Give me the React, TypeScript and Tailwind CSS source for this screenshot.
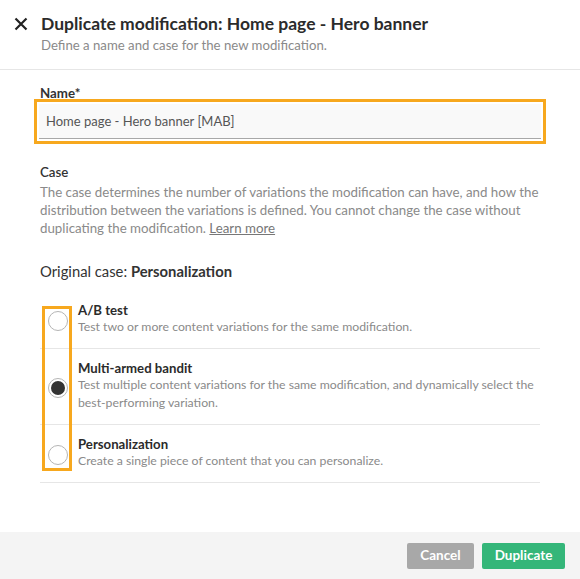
import { useState } from 'react';

const options = [
  {
    id: 'ab',
    title: 'A/B test',
    description: 'Test two or more content variations for the same modification.',
  },
  {
    id: 'mab',
    title: 'Multi-armed bandit',
    description:
      'Test multiple content variations for the same modification, and dynamically select the best-performing variation.',
  },
  {
    id: 'perso',
    title: 'Personalization',
    description: 'Create a single piece of content that you can personalize.',
  },
];

export default function App() {
  const [name, setName] = useState('Home page - Hero banner [MAB]');
  const [selected, setSelected] = useState('mab');

  return (
    <div className="flex h-[579px] w-[580px] flex-col bg-white font-['Lato',sans-serif] text-[#333]">
      <header className="flex h-[70px] shrink-0 gap-[12px] border-b border-[#e6e6e6] pl-[13px] pt-[13px]">
        <button type="button" aria-label="Close" className="mt-[3px] h-[16px] w-[16px] text-[#222]">
          <svg viewBox="0 0 16 16" className="h-[16px] w-[16px]" fill="none" stroke="currentColor" strokeWidth="2.2">
            <path d="M2.5 2.5 13.5 13.5M13.5 2.5 2.5 13.5" />
          </svg>
        </button>
        <div>
          <h1 className="text-[17.5px] leading-[22px] font-bold text-[#2b2b2b]">
            Duplicate modification: Home page - Hero banner
          </h1>
          <p className="mt-[1px] text-[13.2px] leading-[18px] text-[#8a8a8a]">
            Define a name and case for the new modification.
          </p>
        </div>
      </header>

      <main className="flex-1 px-[40px] pt-[17px]">
        <label htmlFor="name" className="block text-[13.3px] leading-[12px] font-bold text-[#333]">
          Name*
        </label>
        <div className="-mx-[6px] border-[3px] border-[#f7a81e] p-[2px]">
          <input
            id="name"
            value={name}
            onChange={(e) => setName(e.target.value)}
            className="h-[35px] w-full border-b border-[#a8a8a8] bg-[#f9f9f9] px-[7px] text-[13px] text-[#555] outline-none"
          />
        </div>

        <h2 className="mt-[19px] text-[13.3px] leading-[18px] font-semibold text-[#333]">Case</h2>
        <p className="mt-[2px] text-[13.3px] leading-[18px] text-[#8a8a8a]">
          The case determines the number of variations the modification can have, and how the distribution between the
          variations is defined. You cannot change the case without duplicating the modification.{' '}
          <a href="#" className="text-[#777] underline">
            Learn more
          </a>
        </p>

        <p className="mt-[25px] text-[14.8px] leading-[18px] text-[#333]">
          Original case: <span className="font-bold">Personalization</span>
        </p>

        <div className="relative mt-[11px]">
          {options.map((option) => {
            const checked = selected === option.id;
            return (
              <label
                key={option.id}
                className="flex cursor-pointer items-center gap-[10px] border-b border-[#e6e6e6] py-[12px] pl-[8px] last:pt-[13px] last:pb-[14px]"
              >
                <input
                  type="radio"
                  name="case"
                  className="sr-only"
                  checked={checked}
                  onChange={() => setSelected(option.id)}
                />
                <span className="mt-[2px] flex h-[20px] w-[20px] shrink-0 items-center justify-center rounded-full border border-[#b5b5b5] bg-white">
                  {checked && <span className="h-[14px] w-[14px] rounded-full bg-[#333]" />}
                </span>
                <span>
                  <span className="block text-[13.2px] leading-[14px] font-bold text-[#2b2b2b]">{option.title}</span>
                  <span className="mt-[1px] block text-[12.25px] leading-[18px] text-[#8a8a8a]">
                    {option.description}
                  </span>
                </span>
              </label>
            );
          })}
          <div className="pointer-events-none absolute top-[15px] left-[2px] h-[165px] w-[30px] border-[3px] border-[#f7a81e]" />
        </div>
      </main>

      <footer className="flex h-[47px] shrink-0 items-center justify-end gap-[8px] bg-[#f4f4f4] pr-[15px]">
        <button
          type="button"
          className="h-[26px] w-[67px] rounded-[2px] bg-[#a8a8a8] text-[13.5px] font-bold text-white"
        >
          Cancel
        </button>
        <button
          type="button"
          className="h-[26px] w-[83px] rounded-[2px] bg-[#34b679] text-[13.5px] font-bold text-white"
        >
          Duplicate
        </button>
      </footer>
    </div>
  );
}
